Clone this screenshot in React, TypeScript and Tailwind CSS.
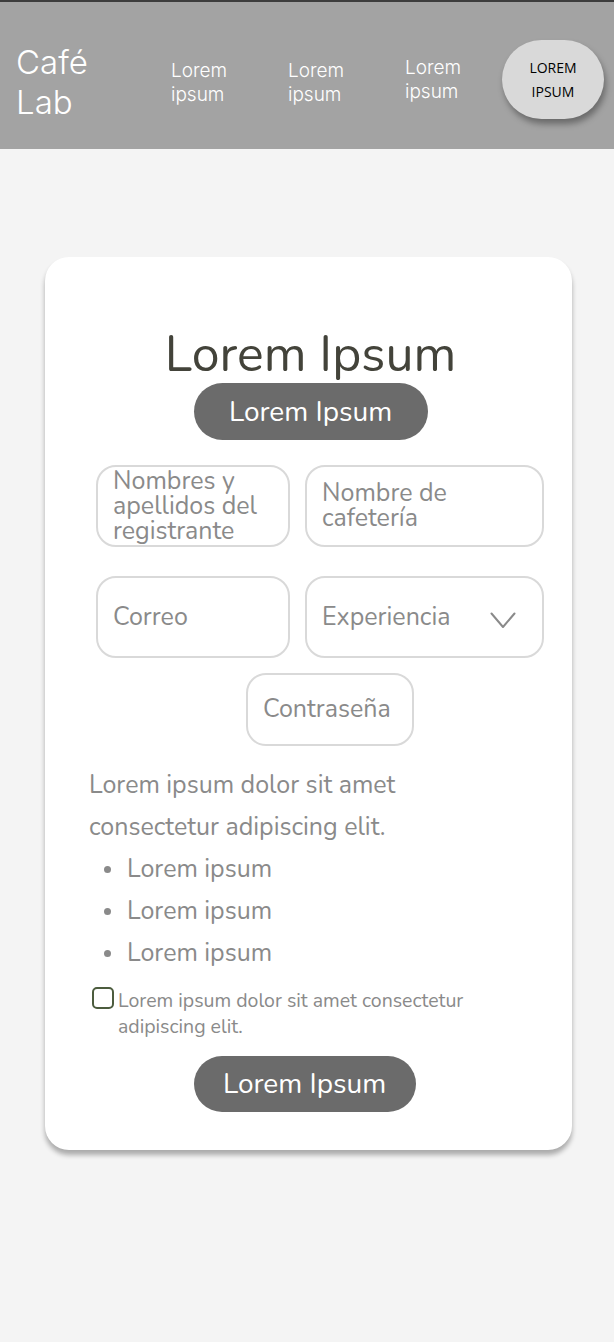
const navItems = ["Lorem ipsum", "Lorem ipsum", "Lorem ipsum"];

const Header = () => {
  return (
    <header className="h-[149px] bg-[#a3a3a3] border-t-2 border-[#3d3d3d] flex items-center pl-4 pr-[10px] pt-[14px] font-['Inter',sans-serif]">
      <div className="text-white text-[33px] leading-[40px] font-light w-[155px] shrink-0 -mt-[2px]">
        Café
        <br />
        Lab
      </div>
      <nav className="flex">
        {navItems.map((item, i) => (
          <a
            key={i}
            href="#"
            className={`text-white text-[19px] leading-[24px] font-light ${i === 2 ? "w-[97px] -mt-[3px]" : "w-[117px]"}`}
          >
            Lorem
            <br />
            ipsum
          </a>
        ))}
      </nav>
      <button className="ml-auto shrink-0 w-[102px] h-[79px] -mt-[6px] rounded-[40px] bg-[#d9d9d9] shadow-[2px_5px_6px_rgba(0,0,0,0.35)] text-[14px] leading-[24px] text-black font-['Open_Sans',sans-serif]">
        LOREM
        <br />
        IPSUM
      </button>
    </header>
  );
};

const Field = ({ label, className }: { label: React.ReactNode; className: string }) => (
  <div
    className={`border-2 border-[#d9d9d9] rounded-[20px] flex items-center pl-[15px] text-[25px] leading-[25px] text-[#8a8a8a] ${className}`}
  >
    {label}
  </div>
);

export default function App() {
  return (
    <div className="min-h-[1342px] bg-[#f4f4f4] font-['Nunito','Noto_Sans',sans-serif]">
      <Header />
      <main className="pt-[108px]">
        <section className="ml-[45px] w-[527px] bg-white rounded-[24px] shadow-[0_5px_5px_rgba(0,0,0,0.3)] pt-[70px] pb-[38px]">
          <h1 className="text-center text-[50px] leading-[56px] text-[#43433a] pl-[4px]">Lorem Ipsum</h1>
          <div className="flex justify-center">
            <button className="w-[234px] h-[57px] rounded-full bg-[#6b6b6b] text-white text-[28px] ml-[4px]">
              Lorem Ipsum
            </button>
          </div>

          <div className="pl-[51px] pr-[28px] mt-[25px]">
            <div className="flex gap-[15px]">
              <Field
                className="w-[194px] h-[82px]"
                label={
                  <span>
                    Nombres y
                    <br />
                    apellidos del
                    <br />
                    registrante
                  </span>
                }
              />
              <Field
                className="w-[239px] h-[82px]"
                label={
                  <span>
                    Nombre de
                    <br />
                    cafetería
                  </span>
                }
              />
            </div>
            <div className="flex gap-[15px] mt-[29px]">
              <Field className="w-[194px] h-[82px]" label="Correo" />
              <Field
                className="w-[239px] h-[82px] pr-[26px] justify-between"
                label={
                  <>
                    <span>Experiencia</span>
                    <svg width="26" height="17" viewBox="0 0 26 17" className="mt-[6px]" fill="none">
                      <path d="M1.5 1.5 L13 15 L24.5 1.5" stroke="#8a8a8a" strokeWidth="2" strokeLinecap="round" strokeLinejoin="round" />
                    </svg>
                  </>
                }
              />
            </div>
            <div className="mt-[15px] ml-[150px]">
              <Field className="w-[168px] h-[73px]" label="Contraseña" />
            </div>
          </div>

          <div className="pl-[44px] pr-[30px] mt-[18px] text-[#8a8a8a]">
            <p className="text-[25px] leading-[42px]">
              Lorem ipsum dolor sit amet
              <br />
              consectetur adipiscing elit.
            </p>
            <ul className="text-[25px] leading-[42px]">
              {["Lorem ipsum", "Lorem ipsum", "Lorem ipsum"].map((t, i) => (
                <li key={i} className="flex items-center">
                  <span className="w-[7px] h-[7px] rounded-full bg-[#8a8a8a] ml-[15px] mr-[16px]" />
                  {t}
                </li>
              ))}
            </ul>
            <label className="flex items-start mt-[10px]">
              <span className="w-[22px] h-[22px] border-2 border-[#4c5c3e] rounded-[5px] ml-[3px] mr-[4px] mt-[3px] shrink-0" />
              <span className="text-[19.5px] leading-[26px] mt-[4px]">
                Lorem ipsum dolor sit amet consectetur
                <br />
                adipiscing elit.
              </span>
            </label>
            <div className="flex justify-center mt-[16px]">
              <button className="w-[222px] h-[56px] rounded-full bg-[#6b6b6b] text-white text-[28px] mr-[22px]">
                Lorem Ipsum
              </button>
            </div>
          </div>
        </section>
      </main>
    </div>
  );
}
